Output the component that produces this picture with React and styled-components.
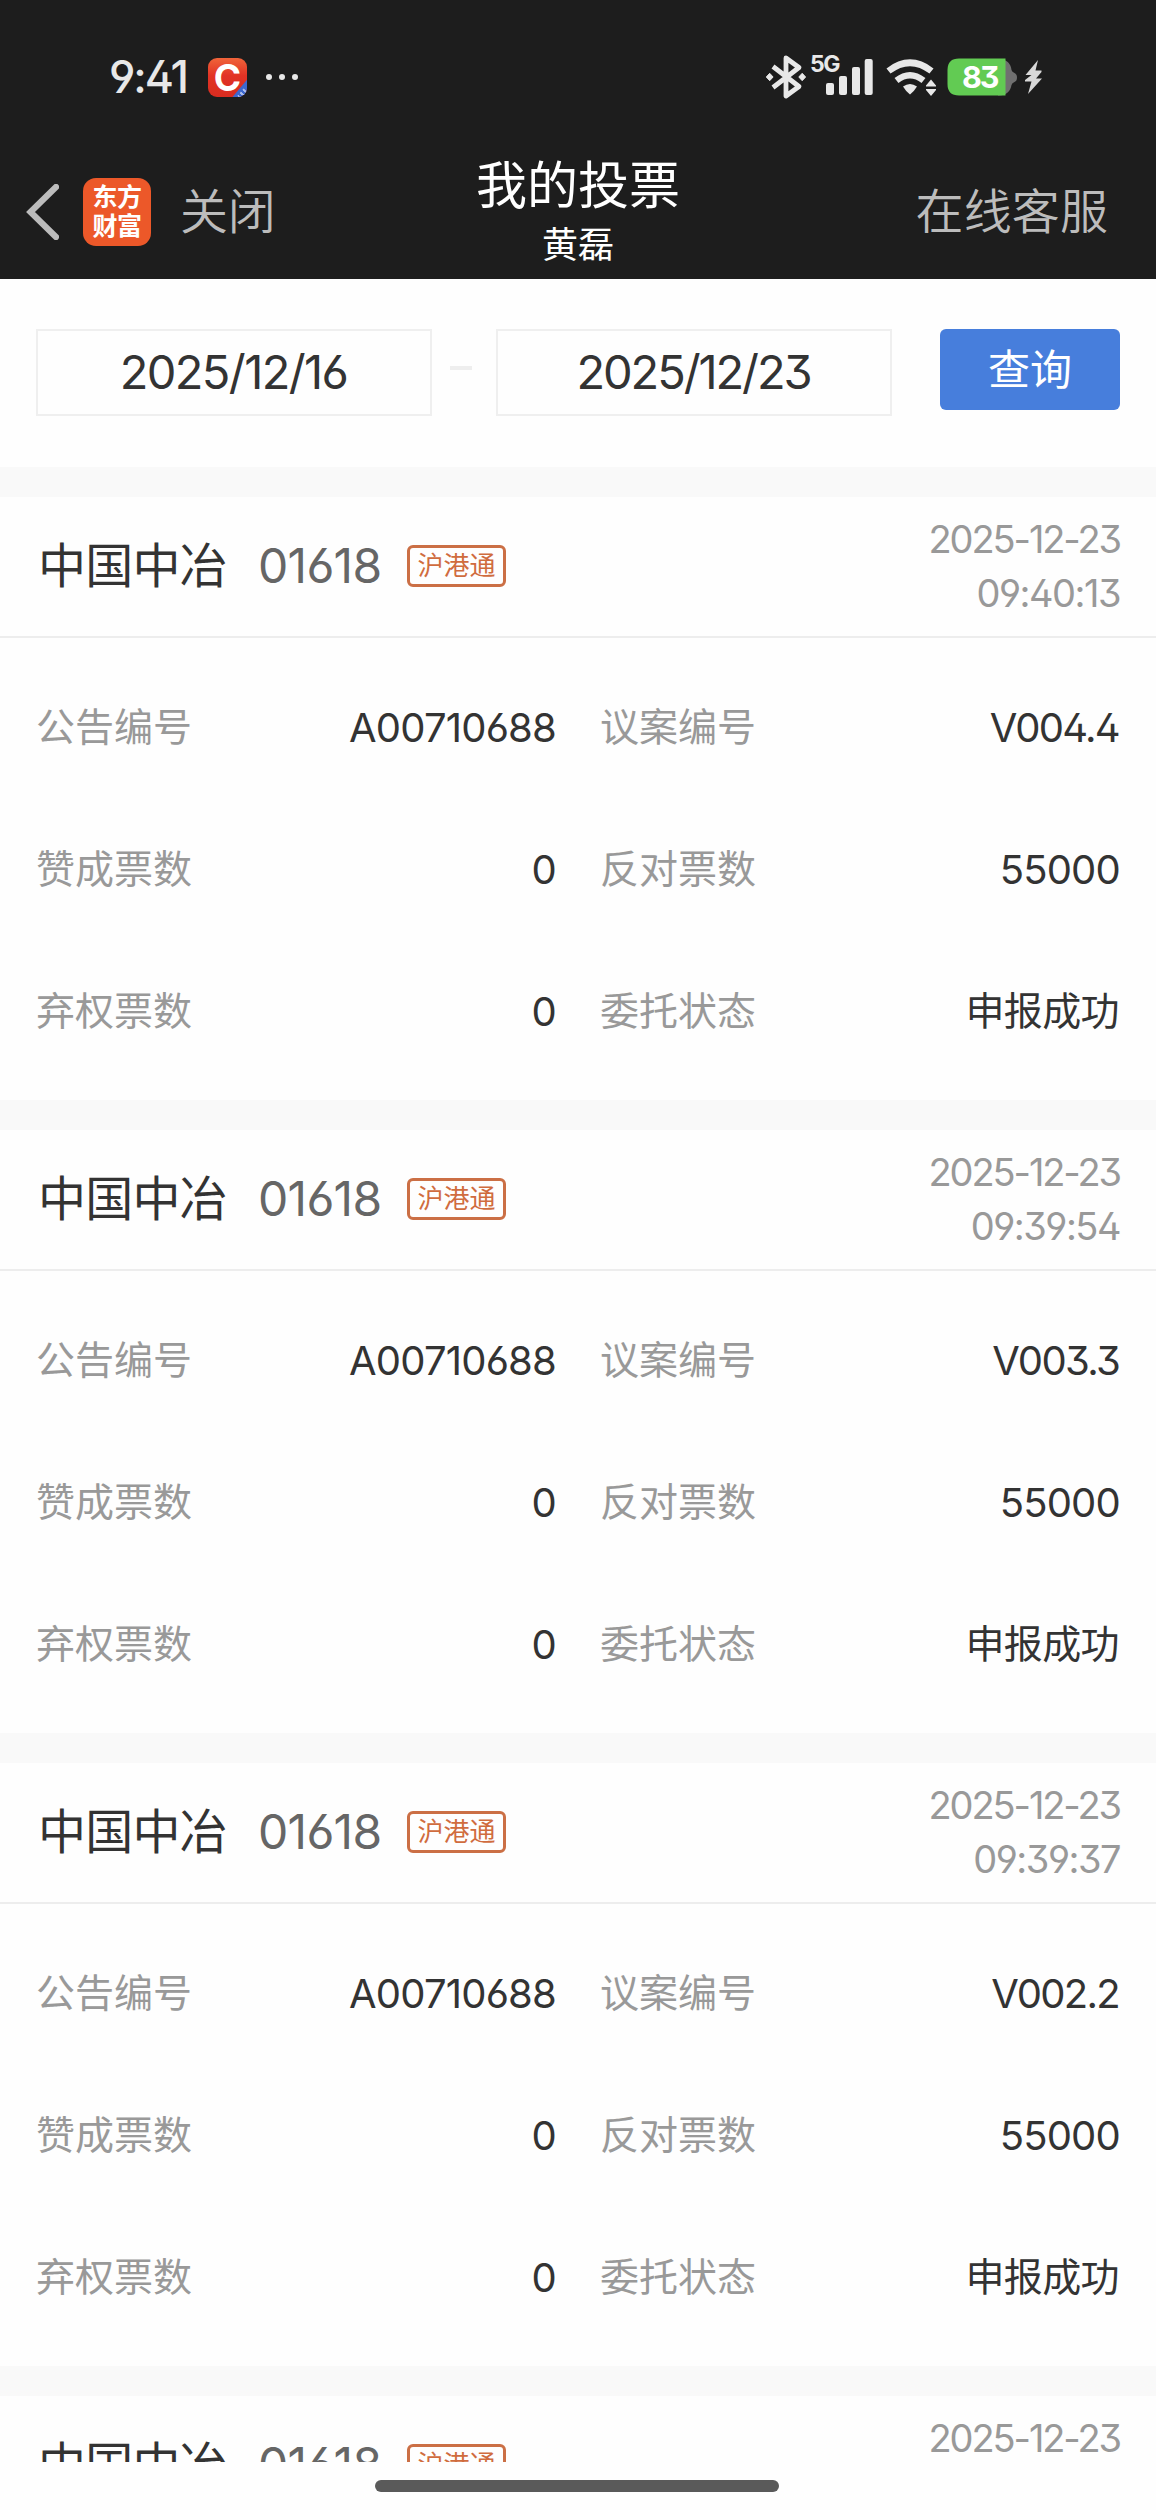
import React from "react";
import styled, { createGlobalStyle } from "styled-components";

const GlobalStyle = createGlobalStyle`
  * { box-sizing: border-box; }
  body {
    margin: 0;
    background: #fefefe;
    font-family: Inter, "Noto Sans CJK SC", sans-serif;
    font-feature-settings: "ss01";
  }
`;

const Page = styled.div`
  display: flex;
  flex-direction: column;
  width: 1156px;
  height: 2510px;
  overflow: hidden;
  background: #fefefe;
`;

const Header = styled.header`
  flex: none;
  height: 279px;
  background: #1d1d1d;
`;

const StatusBar = styled.div`
  display: flex;
  justify-content: space-between;
  align-items: center;
  height: 154px;
  padding: 0 113px 0 109px;
  color: #e8e8e8;
`;

const StatusGroup = styled.div`
  display: flex;
  align-items: center;
`;

const Clock = styled.span`
  width: 99px;
  font-size: 44.5px;
  line-height: 50px;
  font-weight: 500;
  letter-spacing: -2.1px;
`;

const AppBadge = styled.span`
  position: relative;
  display: flex;
  align-items: center;
  justify-content: center;
  width: 39px;
  height: 39px;
  overflow: hidden;
  border-radius: 9px;
  background: linear-gradient(#f0643a, #e23325 45%, #d82c20);
  color: #fff;
  font-size: 37px;
  line-height: 39px;
  font-weight: 700;

  &::after {
    content: "";
    position: absolute;
    right: -11px;
    bottom: -4px;
    width: 32px;
    height: 12px;
    background: repeating-linear-gradient(90deg, #3c68cf 0 2px, #a9bdec 2px 4px) center 3px / 12px 5px no-repeat #3c68cf;
    transform: rotate(-50deg);
  }
`;

const Dots = styled.span`
  display: flex;
  gap: 7px;
  margin-left: 19px;
`;

const Dot = styled.i`
  width: 6px;
  height: 6px;
  border-radius: 50%;
  background: #e8e8e8;
`;

const NavBar = styled.nav`
  display: grid;
  grid-template-columns: 1fr auto 1fr;
  grid-template-rows: 115px;
  align-items: center;
  height: 125px;
  padding: 0 26px 10px;
`;

const NavLeft = styled.div`
  display: flex;
  align-items: center;
`;

const NavText = styled.span`
  color: #bcbcbc;
  font-size: 48px;
  line-height: 60px;
  font-weight: 350;
  letter-spacing: -0.2px;
`;

const ServiceLink = styled(NavText)`
  justify-self: end;
  margin-right: 22px;
  letter-spacing: 0.1px;
`;

const BrandLogo = styled.span`
  display: grid;
  grid-template-columns: 24.5px 24.5px;
  grid-auto-rows: 29px;
  justify-content: center;
  align-content: center;
  width: 68px;
  height: 68px;
  margin: 0 29px 0 24px;
  border-radius: 13px;
  background: #ec5829;
  color: #fff;
  font-size: 25px;
  line-height: 29px;
  font-weight: 700;
`;

const TitleBlock = styled.div`
  display: flex;
  flex-direction: column;
  align-items: center;
  padding-top: 6px;
  color: #fff;
`;

const Title = styled.h1`
  margin: 0;
  font-size: 51px;
  line-height: 60px;
  font-weight: 400;
`;

const Subtitle = styled.span`
  font-size: 36px;
  line-height: 58px;
`;

const FilterBar = styled.section`
  display: flex;
  flex: none;
  align-items: flex-start;
  height: 188px;
  padding: 50px 36px 0;
`;

const DateField = styled.div`
  width: 396px;
  height: 87px;
  padding-right: 1px;
  border: 2px solid #efefef;
  color: #333;
  font-size: 47px;
  line-height: 81px;
  letter-spacing: ${(p) => p.$tracking}px;
  text-align: center;
`;

const RangeDash = styled.span`
  width: 22px;
  height: 4px;
  margin: 37px 24px 0 18px;
  background: #eee;
`;

const QueryButton = styled.button`
  width: 180px;
  height: 81px;
  margin-left: 48px;
  padding: 0;
  border: 0;
  border-radius: 6px;
  background: #477edc;
  color: #fff;
  font: inherit;
  font-size: 42px;
  line-height: 81px;
`;

const List = styled.main`
  flex: 1;
  min-height: 0;
  overflow: hidden;
`;

const Card = styled.article`
  border-top: 30px solid #f9f9f9;
`;

const CardHeader = styled.header`
  display: flex;
  align-items: center;
  height: 141px;
  padding: 0 36px 1px;
  border-bottom: 2px solid #ededed;
`;

const StockName = styled.h2`
  width: 222px;
  margin: 0;
  padding-left: 2px;
  color: #333;
  font-size: 48px;
  line-height: 60px;
  font-weight: 400;
  letter-spacing: -0.8px;
`;

const StockCode = styled.span`
  width: 149px;
  color: #666;
  font-size: 48px;
  line-height: 60px;
  letter-spacing: -0.7px;
`;

const Tag = styled.span`
  width: 99px;
  height: 42px;
  border: 3px solid #cb6f45;
  border-radius: 6px;
  color: #d06c3e;
  font-size: 26px;
  line-height: 36px;
  text-align: center;
`;

const Timestamp = styled.time`
  display: flex;
  flex-direction: column;
  margin-left: auto;
  padding-bottom: 1px;
  color: #999;
  font-size: 38px;
  line-height: 54px;
  text-align: right;
`;

const DateLine = styled.span`
  letter-spacing: -2.1px;
`;

const TimeLine = styled.span`
  letter-spacing: -1.5px;
`;

const Fields = styled.dl`
  display: grid;
  grid-template-columns: 519px 519px;
  column-gap: 45px;
  grid-auto-rows: 142px;
  margin: 0;
  height: 462px;
  padding: 18px 36px;
`;

const Field = styled.div`
  display: flex;
  align-items: center;
  justify-content: space-between;
  font-size: 40px;
  line-height: 60px;
`;

const FieldLabel = styled.dt`
  color: #999;
  font-size: 39px;
`;

const valueTracking = { number: -0.8, proposal: -1.7, status: -0.6 };

const FieldValue = styled.dd`
  margin: 0;
  margin-right: ${(p) => (p.$kind === "number" ? -1 : 0)}px;
  padding-top: ${(p) => (p.$kind === "status" ? 0 : 1)}px;
  color: #333;
  font-size: ${(p) => (p.$kind === "status" ? 39 : 40)}px;
  letter-spacing: ${(p) => valueTracking[p.$kind]}px;
`;

const HomeArea = styled.footer`
  display: flex;
  flex: none;
  align-items: center;
  justify-content: center;
  height: 48px;
  padding-right: 2px;
`;

const HomeBar = styled.span`
  width: 404px;
  height: 12px;
  border-radius: 6px;
  background: #5a5a5a;
`;

const votes = [
  { date: "2025-12-23", time: "09:40:13", proposal: "V004.4" },
  { date: "2025-12-23", time: "09:39:54", proposal: "V003.3" },
  { date: "2025-12-23", time: "09:39:37", proposal: "V002.2" },
  { date: "2025-12-23", time: "", proposal: "" },
];

function StatusIcons() {
  return (
    <svg width="278" height="54" viewBox="765 50 278 54" fill="#e8e8e8">
      <path
        d="M773 66.5 L799 86.5 L786 96 V58 L799 67.5 L773 87.5"
        fill="none"
        stroke="#e8e8e8"
        strokeWidth="4.8"
        strokeLinejoin="round"
      />
      <path d="M769.7 73.3 l3.4 3.7 -3.4 3.7 -3.4 -3.7z M802.2 73.3 l3.4 3.7 -3.4 3.7 -3.4 -3.7z" stroke="#e8e8e8" strokeLinejoin="round" />
      <text x="810" y="71.5" fontSize="23" fontWeight="700" letterSpacing="-1.4">5G</text>
      <rect x="826" y="83" width="8" height="12" rx="2" />
      <rect x="839" y="76" width="8" height="19" rx="2" />
      <rect x="852" y="67" width="8" height="28" rx="2" />
      <rect x="864.7" y="59" width="8" height="36" rx="2" />
      <path d="M888.5 71 Q910 54.5 931.5 71" fill="none" stroke="#e8e8e8" strokeWidth="6.6" />
      <path d="M896.5 80.5 Q910 70 923.5 80.5" fill="none" stroke="#e8e8e8" strokeWidth="6.4" />
      <path d="M903 86.5 Q910 81.5 917 86.5 Q914 91.5 910 94.5 Q906 91.5 903 86.5z" />
      <path d="M931 79.5 l5 6 v1 h-10 v-1z M926 89 h10 v1 l-5 6 -5 -6z" />
      <path d="M998 59 h1 c8 0 12 5 12.5 11 q0.5 2 3 3 q2.5 1 2.5 4.5 t-2.5 4.5 q-2.5 1 -3 3 c-1 6 -5 10.5 -12.5 10.5 h-1z" fill="#707070" />
      <path d="M959 58.5 h46.5 v37 h-46.5 q-11.5 0 -11.5 -11.5 v-14 q0 -11.5 11.5 -11.5z" fill="#62cb53" />
      <text x="962" y="88" fill="#fff" fontSize="30.5" fontWeight="700" letterSpacing="-2.2">83</text>
      <path d="M1038 60 L1025.5 75 h6 L1025 80 v1.5 h6.5 L1028 94 L1042 78.5 h-6 L1041.5 72 v-1.5 h-6z" fill="#d8d8d8" />
    </svg>
  );
}

function BackIcon() {
  return (
    <svg width="33" height="56" viewBox="0 0 33 56" fill="none">
      <path d="M30 3 L4.5 28 L30 53" stroke="#bcbcbc" strokeWidth="6.2" strokeLinecap="round" />
    </svg>
  );
}

function VoteCard({ vote }) {
  const fields = [
    ["公告编号", "A00710688", "number"],
    ["议案编号", vote.proposal, "proposal"],
    ["赞成票数", "0", "number"],
    ["反对票数", "55000", "number"],
    ["弃权票数", "0", "number"],
    ["委托状态", "申报成功", "status"],
  ];
  return (
    <Card>
      <CardHeader>
        <StockName>中国中冶</StockName>
        <StockCode>01618</StockCode>
        <Tag>沪港通</Tag>
        <Timestamp>
          <DateLine>{vote.date}</DateLine>
          <TimeLine>{vote.time || "\u00a0"}</TimeLine>
        </Timestamp>
      </CardHeader>
      {vote.proposal && (
        <Fields>
          {fields.map(([label, value, kind]) => (
            <Field key={label}>
              <FieldLabel>{label}</FieldLabel>
              <FieldValue $kind={kind}>{value}</FieldValue>
            </Field>
          ))}
        </Fields>
      )}
    </Card>
  );
}

export default function App() {
  return (
    <>
      <GlobalStyle />
      <Page>
        <Header>
          <StatusBar>
            <StatusGroup>
              <Clock>9:41</Clock>
              <AppBadge>C</AppBadge>
              <Dots>
                <Dot />
                <Dot />
                <Dot />
              </Dots>
            </StatusGroup>
            <StatusIcons />
          </StatusBar>
          <NavBar>
            <NavLeft>
              <BackIcon />
              <BrandLogo>
                <span>东</span>
                <span>方</span>
                <span>财</span>
                <span>富</span>
              </BrandLogo>
              <NavText>关闭</NavText>
            </NavLeft>
            <TitleBlock>
              <Title>我的投票</Title>
              <Subtitle>黄磊</Subtitle>
            </TitleBlock>
            <ServiceLink>在线客服</ServiceLink>
          </NavBar>
        </Header>
        <FilterBar>
          <DateField $tracking={-1.6}>2025/12/16</DateField>
          <RangeDash />
          <DateField $tracking={-2.1}>2025/12/23</DateField>
          <QueryButton>查询</QueryButton>
        </FilterBar>
        <List>
          {votes.map((vote, i) => (
            <VoteCard key={i} vote={vote} />
          ))}
        </List>
        <HomeArea>
          <HomeBar />
        </HomeArea>
      </Page>
    </>
  );
}
